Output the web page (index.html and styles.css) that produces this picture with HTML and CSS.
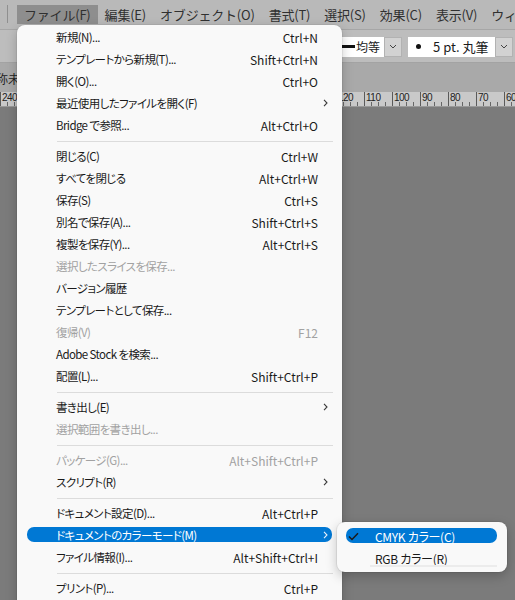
FILE: index.html
```html
<!DOCTYPE html>
<html lang="ja">
<head>
<meta charset="utf-8">
<link rel="stylesheet" href="styles.css">
</head>
<body>
<div class="app">
  <div class="menubar">
    <div class="grip"></div>
    <div class="mb-item active">ファイル(F)</div>
    <div class="mb-item">編集(E)</div>
    <div class="mb-item">オブジェクト(O)</div>
    <div class="mb-item">書式(T)</div>
    <div class="mb-item">選択(S)</div>
    <div class="mb-item">効果(C)</div>
    <div class="mb-item">表示(V)</div>
    <div class="mb-item">ウィンドウ(W)</div>
  </div>
  <div class="controlbar">
    <div class="field stroke-field"><span class="line"></span><span>均等</span></div>
    <div class="chev"><svg width="8" height="5" viewBox="0 0 8 5"><path d="M1 1 L4 4 L7 1" fill="none" stroke="#444" stroke-width="1"/></svg></div>
    <div class="field brush-field"><span class="dot"></span><span>5 pt. 丸筆</span></div>
    <div class="chev"><svg width="8" height="5" viewBox="0 0 8 5"><path d="M1 1 L4 4 L7 1" fill="none" stroke="#444" stroke-width="1"/></svg></div>
  </div>
  <div class="tabbar"><span class="tab-title">名称未設定</span></div>
  <div class="ruler">
    <div class="rc">240</div><div class="rc"></div><div class="rc"></div><div class="rc"></div>
    <div class="rc"></div><div class="rc"></div><div class="rc"></div><div class="rc"></div>
    <div class="rc"></div><div class="rc"></div><div class="rc"></div><div class="rc"></div>
    <div class="rc">120</div><div class="rc">110</div><div class="rc">100</div><div class="rc">90</div>
    <div class="rc">80</div><div class="rc">70</div><div class="rc">60</div>
  </div>
  <div class="canvas"></div>
</div>

<div class="menu">
  <div class="row"><span>新規(N)...</span><span class="sc">Ctrl+N</span><span></span></div>
  <div class="row"><span>テンプレートから新規(T)...</span><span class="sc">Shift+Ctrl+N</span><span></span></div>
  <div class="row"><span>開く(O)...</span><span class="sc">Ctrl+O</span><span></span></div>
  <div class="row"><span>最近使用したファイルを開く(F)</span><span class="sc"></span><span class="arr"><svg width="5" height="8" viewBox="0 0 5 8"><path d="M1 0.8 L4 4 L1 7.2" fill="none" stroke="currentColor" stroke-width="1.1"/></svg></span></div>
  <div class="row"><span>Bridge&nbsp;で参照...</span><span class="sc">Alt+Ctrl+O</span><span></span></div>
  <div class="sep"></div>
  <div class="row"><span>閉じる(C)</span><span class="sc">Ctrl+W</span><span></span></div>
  <div class="row"><span>すべてを閉じる</span><span class="sc">Alt+Ctrl+W</span><span></span></div>
  <div class="row"><span>保存(S)</span><span class="sc">Ctrl+S</span><span></span></div>
  <div class="row"><span>別名で保存(A)...</span><span class="sc">Shift+Ctrl+S</span><span></span></div>
  <div class="row"><span>複製を保存(Y)...</span><span class="sc">Alt+Ctrl+S</span><span></span></div>
  <div class="row disabled"><span>選択したスライスを保存...</span><span class="sc"></span><span></span></div>
  <div class="row"><span>バージョン履歴</span><span class="sc"></span><span></span></div>
  <div class="row"><span>テンプレートとして保存...</span><span class="sc"></span><span></span></div>
  <div class="row disabled"><span>復帰(V)</span><span class="sc">F12</span><span></span></div>
  <div class="row"><span>Adobe Stock&nbsp;を検索...</span><span class="sc"></span><span></span></div>
  <div class="row"><span>配置(L)...</span><span class="sc">Shift+Ctrl+P</span><span></span></div>
  <div class="sep"></div>
  <div class="row"><span>書き出し(E)</span><span class="sc"></span><span class="arr"><svg width="5" height="8" viewBox="0 0 5 8"><path d="M1 0.8 L4 4 L1 7.2" fill="none" stroke="currentColor" stroke-width="1.1"/></svg></span></div>
  <div class="row disabled"><span>選択範囲を書き出し...</span><span class="sc"></span><span></span></div>
  <div class="sep"></div>
  <div class="row disabled"><span>パッケージ(G)...</span><span class="sc">Alt+Shift+Ctrl+P</span><span></span></div>
  <div class="row"><span>スクリプト(R)</span><span class="sc"></span><span class="arr"><svg width="5" height="8" viewBox="0 0 5 8"><path d="M1 0.8 L4 4 L1 7.2" fill="none" stroke="currentColor" stroke-width="1.1"/></svg></span></div>
  <div class="sep"></div>
  <div class="row"><span>ドキュメント設定(D)...</span><span class="sc">Alt+Ctrl+P</span><span></span></div>
  <div class="row hl"><span>ドキュメントのカラーモード(M)</span><span class="sc"></span><span class="arr"><svg width="5" height="8" viewBox="0 0 5 8"><path d="M1 0.8 L4 4 L1 7.2" fill="none" stroke="currentColor" stroke-width="1.1"/></svg></span></div>
  <div class="row"><span>ファイル情報(I)...</span><span class="sc">Alt+Shift+Ctrl+I</span><span></span></div>
  <div class="sep"></div>
  <div class="row"><span>プリント(P)...</span><span class="sc">Ctrl+P</span><span></span></div>
</div>

<div class="submenu">
  <div class="srow hl"><span class="chk"><svg width="11" height="9" viewBox="0 0 11 9"><path d="M1 4.5 L4 7.5 L10 1.2" fill="none" stroke="#1a1a1a" stroke-width="1.5"/></svg></span><span class="slabel">CMYK カラー(C)</span></div>
  <div class="srow last"><span class="chk"></span><span class="slabel">RGB カラー(R)</span></div>
</div>
</body>
</html>
```

FILE: styles.css
```css
* { box-sizing: border-box; margin: 0; padding: 0; }
html, body { width: 515px; height: 600px; overflow: hidden; }
body {
  margin: 0;
  position: relative;
  background: #7b7b7b;
  font-family: "Noto Sans CJK JP", "Noto Sans", sans-serif;
  color: #1b1b1b;
}

.app { display: flex; flex-direction: column; height: 600px; }

/* menu bar */
.menubar {
  height: 30px;
  flex: 0 0 30px;
  background: #b9b9b9;
  border-bottom: 1px solid #a6a6a6;
  display: flex;
  align-items: flex-start;
  padding-top: 5px;
  white-space: nowrap;
  overflow: hidden;
}
.grip { width: 1px; height: 18px; background: #8f8f8f; margin: 0 9px 0 7px; flex: 0 0 1px; }
.mb-item {
  height: 19px;
  line-height: 19px;
  padding: 0 7px;
  font-size: 13px;
  letter-spacing: -0.2px;
  color: #303030;
  flex: 0 0 auto;
}
.mb-item.active { background: #8e8e8e; }

/* control bar */
.controlbar {
  height: 33px;
  flex: 0 0 33px;
  background: #bdbdbd;
  border-bottom: 1px solid #a3a3a3;
  display: flex;
  align-items: center;
  justify-content: flex-end;
  padding-right: 2px;
  padding-top: 1px;
}
.field {
  height: 20px;
  background: #fff;
  display: flex;
  align-items: center;
  font-size: 12px;
  color: #1b1b1b;
  white-space: nowrap;
}
.stroke-field { width: 84px; justify-content: flex-end; padding-right: 4px; }
.stroke-field .line { width: 16px; height: 3px; background: #111; margin-right: 1px; }
.brush-field { width: 87px; padding-left: 8px; font-size: 13px; margin-left: 6px; }
.brush-field .dot { width: 5px; height: 5px; border-radius: 50%; background: #111; margin-right: 12px; }
.chev {
  width: 18px;
  height: 20px;
  background: #d2d2d2;
  border: 1px solid #b2b2b2;
  display: flex;
  align-items: center;
  justify-content: center;
}

/* tab bar */
.tabbar {
  height: 29px;
  flex: 0 0 29px;
  background: #a9a9a9;
  display: flex;
  align-items: center;
  white-space: nowrap;
  font-size: 12px;
  color: #222;
  overflow: hidden;
}
.tab-title { margin-left: -16px; padding-top: 1px; }

/* ruler */
.ruler {
  height: 15px;
  flex: 0 0 15px;
  background: #c9c9c9;
  border-bottom: 1px solid #9a9a9a;
  display: flex;
  overflow: hidden;
}
.rc {
  flex: 0 0 28px;
  border-left: 1px solid #5a5a5a;
  padding-left: 1px;
  padding-top: 1px;
  font-family: "Liberation Sans", sans-serif;
  font-size: 10px;
  letter-spacing: -0.5px;
  line-height: 10px;
  color: #222;
  background-image: repeating-linear-gradient(to right, transparent 0 6px, #666 6px 7px);
  background-size: 100% 4px;
  background-position: left bottom;
  background-repeat: no-repeat;
}

.canvas { flex: 1; background: #7b7b7b; }

/* dropdown menu */
.menu {
  position: absolute;
  left: 17px;
  top: 25px;
  width: 325px;
  height: 600px;
  background: #f9f9f9;
  border-radius: 8px;
  box-shadow: 0 0 0 1px rgba(0, 0, 0, 0.05), 0 4px 12px rgba(0, 0, 0, 0.22);
  padding: 1px 10px 10px 10px;
  font-size: 12px;
  color: #1a1a1a;
}
.row {
  height: 22px;
  display: grid;
  grid-template-columns: 1fr auto 14px;
  align-items: center;
  padding-left: 29px;
  white-space: nowrap;
}
.row > span:first-child {
  font-size: 11.5px;
  letter-spacing: -0.6px;
  font-feature-settings: "palt" 1;
}
.row .sc { text-align: right; }
.row .arr { display: flex; justify-content: center; align-items: center; color: #3a3a3a; }
.row.disabled { color: #a2a2a2; }
.row.hl {
  height: 15px;
  margin: 3px 0 4px;
  background: #0078d4;
  color: #fff;
  border-radius: 7px;
}
.row.hl .arr { color: #e8f0fa; }
.sep { height: 1px; margin: 5px -1px 3px 30px; background: #dcdcdc; }

/* submenu */
.submenu {
  position: absolute;
  left: 337px;
  top: 522px;
  width: 170px;
  background: #f9f9f9;
  border-radius: 8px;
  box-shadow: 0 0 0 1px rgba(0, 0, 0, 0.06), 0 4px 12px rgba(0, 0, 0, 0.22);
  padding: 3px 10px 3px 9px;
  font-size: 12px;
  color: #1a1a1a;
}
.srow {
  height: 22px;
  display: grid;
  grid-template-columns: 29px 1fr;
  align-items: center;
  white-space: nowrap;
  position: relative;
}
.srow .slabel { letter-spacing: -0.3px; font-feature-settings: "palt" 1; }
.srow.hl {
  height: 15px;
  margin: 3px 0 4px;
  background: #0078d4;
  color: #fff;
  border-radius: 7px;
}
.srow .chk { display: flex; align-items: center; padding-left: 2px; }
.srow.last::after {
  content: "";
  position: absolute;
  left: 24px;
  right: 0;
  bottom: 2px;
  height: 2px;
  background: #ececec;
}
```
